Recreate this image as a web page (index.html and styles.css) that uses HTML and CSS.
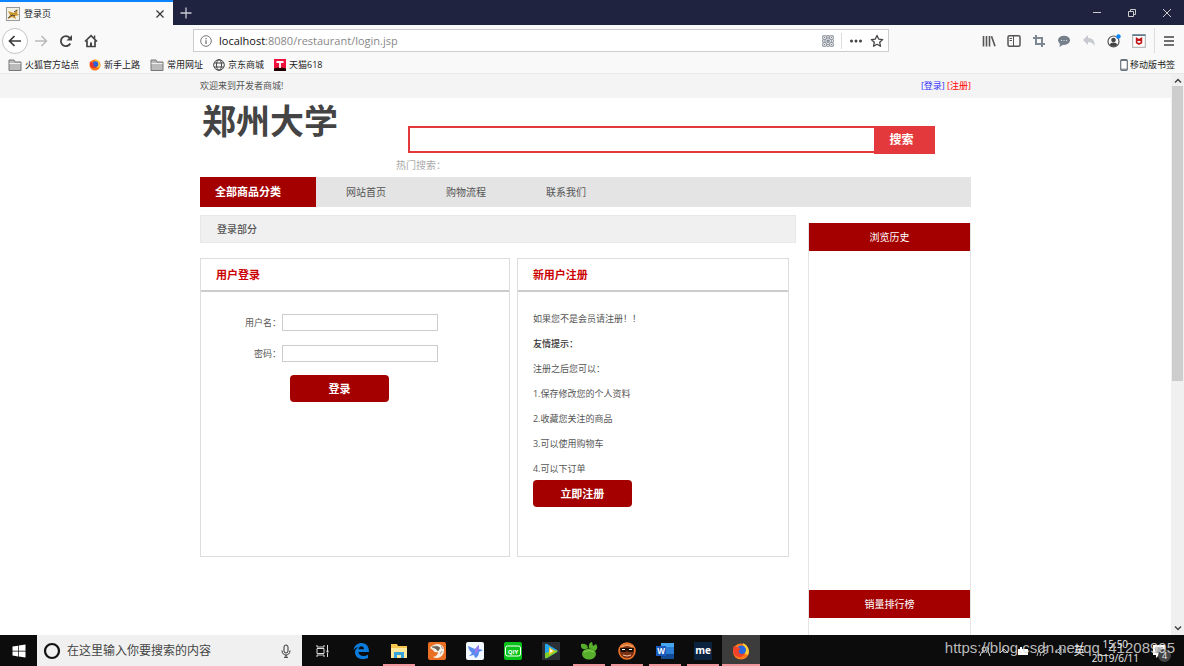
FILE: index.html
```html
<!DOCTYPE html>
<html lang="zh-CN">
<head>
<meta charset="utf-8">
<title>登录页</title>
<link rel="stylesheet" href="styles.css">
</head>
<body>
<div class="titlebar">
  <div class="tab">
    <svg class="i14" viewBox="0 0 14 14"><rect x=".5" y=".5" width="13" height="13" fill="#f3f1e6" stroke="#999"/><path d="M2 4l3 1 3 1 4-4-1 4 2 2-4 1 1 3-4-2-4 2 2-4z" fill="#c9962f"/><path d="M2 11l4-3 3 1M8 5l3-2" stroke="#4c4636" fill="none"/></svg>
    <span class="tab-name">登录页</span>
    <button class="plain" aria-label="关闭标签页"><svg class="i10" viewBox="0 0 10 10"><path d="M1.500 1.500l7 7m0-7l-7 7" stroke="#333" stroke-width="1.200"/></svg></button>
  </div>
  <button class="plain newtab" aria-label="新标签页"><svg class="i12" viewBox="0 0 12 12"><path d="M6 .5v11M.5 6h11" stroke="#c9c9d4" stroke-width="1.300"/></svg></button>
  <div class="winbtns">
    <button class="plain" aria-label="最小化"><svg class="i10" viewBox="0 0 10 10"><path d="M1 4.500h8" stroke="#ccc"/></svg></button>
    <button class="plain" aria-label="还原"><svg class="i10" viewBox="0 0 10 10"><path d="M1.500 3.500h5v5h-5zM3.500 3V1.500h5v5H7" fill="none" stroke="#ccc"/></svg></button>
    <button class="plain" aria-label="关闭"><svg class="i10" viewBox="0 0 10 10"><path d="M1 1l8 8m0-8l-8 8" stroke="#ccc"/></svg></button>
  </div>
</div>
<div class="navbar">
  <div class="navbtns">
    <button class="plain back" aria-label="后退"><svg class="i14" viewBox="0 0 14 14"><path d="M13 7H1.500M6.500 2L1.500 7l5 5" fill="none" stroke="#3a3a3a" stroke-width="1.700"/></svg></button>
    <button class="plain" aria-label="前进"><svg class="i14" viewBox="0 0 14 14"><path d="M1 7h11.500M7.500 2l5 5-5 5" fill="none" stroke="#b9b9b9" stroke-width="1.500"/></svg></button>
    <button class="plain" aria-label="刷新"><svg class="i14" viewBox="0 0 14 14"><path d="M11.300 9.500A5 5 0 1 1 10.800 4" fill="none" stroke="#444" stroke-width="1.800"/><path d="M13 1v5.500H7.500z" fill="#444"/></svg></button>
    <button class="plain" aria-label="主页"><svg class="i14" viewBox="0 0 14 14"><path d="M1 7.500L7 1.700l6 5.800M3 6.500v6h8v-6" fill="none" stroke="#444" stroke-width="1.700"/><path d="M6 8.500h2v4H6zM9.800 1.500h1.500v3H9.800z" fill="#444"/></svg></button>
  </div>
  <div class="urlbar">
    <svg class="i12" viewBox="0 0 12 12"><circle cx="6" cy="6" r="5.300" fill="none" stroke="#777"/><path d="M6 5.200v3.800M6 3v1.200" stroke="#777" stroke-width="1.300"/></svg>
    <span class="url"><b>localhost</b>:8080/restaurant/login.jsp</span>
    <svg class="i12" viewBox="0 0 12 12" fill="none" stroke="#7c858e"><path d="M.8.8h3.500v3.500H.8zM7.700.8h3.500v3.500H7.700zM.8 7.700h3.500v3.500H.8zM7.700 7.700h3.500v3.500H7.700z"/><path d="M6 0v12M0 6h12" stroke-width="1.600" stroke-dasharray="1.500 .7"/><path d="M2 2.500h1M9 2.500h1M2 9.500h1M9 9.500h1"/></svg>
    <span class="sep"></span>
    <svg class="i14" viewBox="0 0 14 14" fill="#444"><circle cx="2.500" cy="7" r="1.500"/><circle cx="7" cy="7" r="1.500"/><circle cx="11.500" cy="7" r="1.500"/></svg>
    <svg class="i14" viewBox="0 0 14 14"><path d="M7 1.400l1.700 3.700 4 .5-3 2.700.8 4L7 10.300l-3.500 2 .8-4-3-2.700 4-.5z" fill="none" stroke="#444" stroke-width="1.300" stroke-linejoin="round"/></svg>
  </div>
  <div class="tools">
    <svg class="i14" viewBox="0 0 14 14"><path d="M1.500 2v10.500M4.500 2v10.500M7.500 2v10.500M9.500 2.200l3.500 10" fill="none" stroke="#555" stroke-width="1.600"/></svg>
    <svg class="i14" viewBox="0 0 14 14"><rect x="1" y="1.700" width="12" height="10.500" rx="1.500" fill="none" stroke="#555" stroke-width="1.500"/><path d="M6.500 2v10M2.500 4.500H5M2.500 6.500H5" stroke="#555"/></svg>
    <svg class="i14" viewBox="0 0 14 14"><path d="M1 4h9v9M4 1v9h9" fill="none" stroke="#7e8893" stroke-width="2"/></svg>
    <svg class="i14" viewBox="0 0 14 14"><ellipse cx="7" cy="6.300" rx="6" ry="4.600" fill="#75808b"/><path d="M3 9l-.5 4 4-2.500z" fill="#75808b"/><path d="M4 6.500h1m1.500 0h1M9 6.500h1" stroke="#dfe3e6"/></svg>
    <svg class="i14" viewBox="0 0 14 14"><path d="M6 1v3c5 0 7 3 6.500 8C11 9 9 8 6 8v3L1 6z" fill="#c6c9ce"/></svg>
    <svg class="i14" viewBox="0 0 14 14"><circle cx="6.500" cy="7.500" r="5.500" fill="none" stroke="#555" stroke-width="1.200"/><circle cx="6.500" cy="6" r="2.300" fill="#444"/><path d="M2.700 10.800c1-3 6.600-3 7.600 0-2 2.500-5.600 2.500-7.600 0z" fill="#444"/><circle cx="11.500" cy="2.500" r="2.200" fill="#0a84ff"/></svg>
    <svg class="i14" viewBox="0 0 14 14"><rect x=".7" y=".7" width="12.600" height="12.600" fill="#fff" stroke="#aaa"/><path d="M.5 1.200h13" stroke="#55748a" stroke-width="1.500"/><path d="M4.600 4.500v4.200L7 10l2.400-1.300V4.500L7 6z" fill="none" stroke="#c01818" stroke-width="1.600"/></svg>
    <span class="sep tall"></span>
    <svg class="i12" viewBox="0 0 12 12"><path d="M1 2h10M1 6h10M1 10h10" stroke="#444" stroke-width="1.500"/></svg>
  </div>
</div>
<nav class="bookmarks">
  <a href="#"><svg class="i14" viewBox="0 0 14 14"><path d="M1 2h5l1 2h6v8.500H1z" fill="#bbb" stroke="#777"/><path d="M1.500 5.500h11" stroke="#eee"/></svg>火狐官方站点</a>
  <a href="#"><svg class="i12" viewBox="0 0 14 14"><circle cx="7" cy="7" r="6.500" fill="#ff7b1a"/><path d="M7 .5a6.500 6.500 0 0 1 5 10L8 9z" fill="#ffc83a"/><circle cx="7.500" cy="6" r="3.300" fill="#2c5fd8"/><path d="M1 3c2 1 3 1 5 3-2 1-1 3 3 3-3 4-8 1-8-3z" fill="#e8342c"/></svg>新手上路</a>
  <a href="#"><svg class="i14" viewBox="0 0 14 14"><path d="M1 2h5l1 2h6v8.500H1z" fill="#bbb" stroke="#777"/><path d="M1.500 5.500h11" stroke="#eee"/></svg>常用网址</a>
  <a href="#"><svg class="i12" viewBox="0 0 12 12" fill="none" stroke="#444"><circle cx="6" cy="6" r="5.300"/><ellipse cx="6" cy="6" rx="2.500" ry="5.300"/><path d="M1.300 4h9.400M1.300 8h9.400"/></svg>京东商城</a>
  <a href="#"><svg class="i12" viewBox="0 0 12 12"><path d="M0 0h12v12H0z" fill="#f0103c"/><path d="M0 9.500q6-2 12 0V12H0z" fill="#200"/><path d="M2.500 3h7M6 3v6" stroke="#fff" stroke-width="1.800"/></svg>天猫618</a>
  <a href="#" class="mobile"><svg class="phone" viewBox="0 0 8 12"><rect x=".7" y=".7" width="6.600" height="10.600" rx="1" fill="#fff" stroke="#6a747c" stroke-width="1.200"/><path d="M1 1.500h6M1 10.200h6" stroke="#6a747c"/></svg>移动版书签</a>
</nav>
<div class="viewport">
  <div class="page">
    <div class="topline"><div class="wrap topline-in">
      <span>欢迎来到开发者商城!</span>
      <span><a class="login" href="#">[登录]</a> <a class="reg" href="#">[注册]</a></span>
    </div></div>
    <div class="wrap">
      <header class="head">
        <h1 class="logo">郑州大学</h1>
        <div class="search">
          <form class="searchbox"><input type="text" aria-label="搜索"><button type="button">搜索</button></form>
          <p class="hot">热门搜索：</p>
        </div>
      </header>
      <nav class="menu">
        <a class="all" href="#">全部商品分类</a>
        <a href="#">网站首页</a><a href="#">购物流程</a><a href="#">联系我们</a>
      </nav>
      <div class="cols">
        <main class="main">
          <h2 class="section">登录部分</h2>
          <div class="cards">
            <section class="card card-login">
              <h3>用户登录</h3>
              <form class="form">
                <label for="u">用户名：</label><input id="u" type="text">
                <label for="p">密码：</label><input id="p" type="password">
                <button type="button" class="btn">登录</button>
              </form>
            </section>
            <section class="card card-reg">
              <h3>新用户注册</h3>
              <div class="tips">
                <p>如果您不是会员请注册！！</p>
                <p><strong>友情提示：</strong></p>
                <p>注册之后您可以：</p>
                <p>1.保存修改您的个人资料</p>
                <p>2.收藏您关注的商品</p>
                <p>3.可以使用购物车</p>
                <p>4.可以下订单</p>
                <button type="button" class="btn">立即注册</button>
              </div>
            </section>
          </div>
        </main>
        <aside class="side">
          <section class="history"><h3>浏览历史</h3></section>
          <section class="rank"><h3>销量排行榜</h3></section>
        </aside>
      </div>
    </div>
  </div>
  <div class="scroll">
    <svg class="i10" viewBox="0 0 10 10"><path d="M2 6.500l3-3 3 3" fill="none" stroke="#444" stroke-width="1.500"/></svg>
    <div class="track"><div class="thumb"></div></div>
    <svg class="i10" viewBox="0 0 10 10"><path d="M2 3.500l3 3 3-3" fill="none" stroke="#444" stroke-width="1.500"/></svg>
  </div>
</div>
<footer class="taskbar">
  <button class="plain start" aria-label="开始"><svg class="i14" viewBox="0 0 14 14" fill="#fff"><path d="M.5 2.500l5.600-.8v5H.5zM6.800 1.600l6.700-1v6.100H6.800zM.5 7.400h5.600v5l-5.600-.8zM6.800 7.400h6.700v6.100l-6.700-1z"/></svg></button>
  <div class="cortana">
    <svg class="i18" viewBox="0 0 18 18"><circle cx="9" cy="9" r="7" fill="none" stroke="#111" stroke-width="2.200"/></svg>
    <input type="text" aria-label="搜索" placeholder="在这里输入你要搜索的内容">
    <svg class="i14" viewBox="0 0 14 14" fill="none" stroke="#333"><rect x="5" y="1" width="4" height="8" rx="2"/><path d="M3 6.500c0 6 8 6 8 0M7 11v2.500M5 13.300h4"/></svg>
  </div>
  <div class="apps">
    <span class="app"><svg class="i14" viewBox="0 0 14 14" fill="none" stroke="#ddd"><path d="M1 1v2h7V1M1 4.500h7v5H1zM1 13v-2h7v2M11.500 1v6M11.500 9v4"/><path d="M10.500 7.500h2" stroke-width="2"/></svg></span>
    <span class="app"><svg class="i18" viewBox="0 0 18 18"><path d="M1.500 8C2.500 3 6 1 9.500 1c5 0 7.500 3.500 7.500 9H6.500c.3 4 5.500 5 9.500 2.700V16c-5 2.500-13 1-13-6 0-2 1.500-4 3.500-5-3 .6-4 2-5 3zM6.500 7.300H12c0-4-5-4-5.500 0z" fill="#0b7bdc" fill-rule="evenodd"/></svg></span>
    <span class="app run"><svg class="i18" viewBox="0 0 18 18"><path d="M1 2h6l1 2h9v12H1z" fill="#f6c64f"/><path d="M1 6h16v10H1z" fill="#ffe79b"/><path d="M4 10h10v6h-3v-3H7v3H4z" fill="#38a4dc"/></svg></span>
    <span class="app"><svg class="i18" viewBox="0 0 18 18"><rect width="18" height="18" rx="2" fill="#e96f22"/><path d="M2 6q3-4 8-4 6 1 6 6 0 6-6 8-4 0-5-1 5-1 5-5-4 1-5-2z" fill="#f7f2e8"/><path d="M4 5q6-2 8 1l-2 3q-2-3-6-4zM13 4l2 3M12 12l2-3" fill="#6b6258" stroke="#6b6258" stroke-width=".6"/></svg></span>
    <span class="app"><svg class="i18" viewBox="0 0 18 18"><rect width="18" height="18" rx="2" fill="#f4f8ff"/><path d="M2 4l7 3 4-4v4l4 1-4 2q0 5-4 6l-1-3-5 1 3-3q-3-2-4-7z" fill="#598cf0"/><path d="M9 7l4-4v5l-4 4z" fill="#9a79ec"/></svg></span>
    <span class="app"><svg class="i18" viewBox="0 0 18 18"><rect width="18" height="18" rx="2" fill="#08c41a"/><rect x="1.500" y="4" width="15" height="10" rx="2" fill="none" stroke="#fff"/><text x="9" y="12" class="iq">QIY</text></svg></span>
    <span class="app"><svg class="i18" viewBox="0 0 18 18"><rect width="18" height="18" fill="#2c3036"/><path d="M3 3q0-2 2-1l10 6q1 1 0 2L5 16q-2 1-2-1z" fill="#25a7ef"/><path d="M3 11l12-3q1 1 0 2L5 16q-2 1-2-1z" fill="#80ce29"/><path d="M7 5l6 4-6 4z" fill="#ffc719"/><path d="M8 7l3 2-3 2z" fill="#fff"/></svg></span>
    <span class="app run"><svg class="i18" viewBox="0 0 18 18" fill="#57ad2c"><ellipse cx="9" cy="12" rx="7" ry="5.500"/><path d="M1 2q6-1 7 4-5 3-7-1zM9 6q-1-5 3-6l1 4 3-2q3 4-1 7z"/><path d="M4 10q5-3 10 0" stroke="#86d64f" fill="none"/></svg></span>
    <span class="app run"><svg class="i18" viewBox="0 0 18 18"><circle cx="9" cy="9" r="8" fill="#7a3015" stroke="#f47629" stroke-width="1.500"/><path d="M3 5q6-4 12 0" stroke="#f29b55" stroke-width="2" fill="none"/><path d="M2 6h14l-1 4H10L9 8 8 10H3z" fill="#190d08"/><path d="M4 7.500h3M11 7.500h3" stroke="#fff"/><path d="M5 13q4 2 8 0" stroke="#f6c9a8" fill="none"/></svg></span>
    <span class="app run"><svg class="i18" viewBox="0 0 18 18"><rect x="5" y="1" width="13" height="16" rx="1" fill="#2b7cd3"/><path d="M5 1h13v4H5z" fill="#45a5ee"/><path d="M5 12h13v5H5z" fill="#124a96"/><path d="M0 4h10v10H0z" fill="#185abd"/><text x="5" y="12" class="wd">W</text></svg></span>
    <span class="app run"><svg class="i18" viewBox="0 0 18 18"><rect width="18" height="18" fill="#0c2340"/><text x="9" y="12" class="me">me</text></svg></span>
    <span class="app run active"><svg class="i18" viewBox="0 0 18 18"><circle cx="9" cy="9.500" r="8" fill="#ff7b1a"/><path d="M11 1a9 9 0 0 1 5 12l-4-2z" fill="#ffd03a"/><circle cx="9.500" cy="8" r="4.500" fill="#2867df"/><path d="M1.500 4l3 1q2 0 4 2-3 2-1 4t5 0q-1 5-6 4Q1 14 1 8z" fill="#f0432a"/></svg></span>
  </div>
  <div class="tray">
    <svg class="i12" viewBox="0 0 12 12" fill="none" stroke="#ddd"><circle cx="5" cy="4" r="2"/><path d="M1 11q1-5 5-4M7 2q4 0 2 4l2 5"/></svg>
    <svg class="i12" viewBox="0 0 12 12"><path d="M2 8l4-4 4 4" fill="none" stroke="#ccc"/></svg>
    <svg class="i12" viewBox="0 0 12 12"><path d="M1 4h2V2h2v2h6v6H1z" fill="#fff"/></svg>
    <svg class="i12" viewBox="0 0 12 12"><path d="M1 11a10 10 0 0 1 10-9M4 11a7 7 0 0 1 7-6M7 11a4 4 0 0 1 4-3" fill="none" stroke="#bbb"/></svg>
    <svg class="i12" viewBox="0 0 12 12"><path d="M1 5h2l3-3v8L3 7H1zM8 4q2 2 0 4" fill="none" stroke="#bbb"/></svg>
    <span class="ime">英</span>
    <div class="clock"><span>15:50</span><span>2019/6/11</span></div>
    <div class="note"><svg class="i14" viewBox="0 0 14 14"><path d="M1 1h12v10H7l-3 3v-3H1z" fill="#fff"/><path d="M3 4h8M3 6h8M3 8h8" stroke="#555"/></svg><span class="count">4</span></div>
  </div>
  <div class="watermark">https://blog.csdn.net/qq_41208995</div>
</footer>
</body>
</html>
```

FILE: styles.css
```css
* { box-sizing: border-box; }
html, body { height: 100%; }
body {
  margin: 0;
  display: flex;
  flex-direction: column;
  overflow: hidden;
  background: #fff;
  color: #555;
  font: 9px/16px "Open Sans", "Noto Sans CJK SC", sans-serif;
}
h1, h2, h3, p { margin: 0; }
a { color: inherit; text-decoration: none; }
input, button { font: inherit; border-radius: 0; }
svg { display: block; flex: none; }
.i10 { width: 10px; height: 10px; }
.i12 { width: 12px; height: 12px; }
.i14 { width: 14px; height: 14px; }
.i18 { width: 18px; height: 18px; }
.plain { display: flex; align-items: center; justify-content: center; padding: 0; border: 0; background: none; }

.titlebar { display: flex; flex: none; height: 25px; background: #20233f; }
.tab { display: flex; align-items: center; gap: 4px; width: 173px; padding: 0 8px 0 6px; border-top: 2px solid #0a84ff; background: #f9f9fa; color: #222; }
.tab-name { flex: 1; }
.newtab { width: 26px; }
.winbtns { display: flex; margin-left: auto; }
.winbtns button { width: 35px; }

.navbar { display: flex; flex: none; align-items: center; height: 31px; background: #f9f9fa; }
.navbtns { display: flex; align-items: center; width: 193px; padding-left: 2px; }
.navbtns button { width: 25px; height: 26px; }
.navbtns .back { width: 26px; border: 1px solid #c4c4c6; border-radius: 50%; background: #fff; }
.urlbar { display: flex; align-items: center; gap: 7px; flex: 1; max-width: 696px; height: 23px; padding: 0 4px 0 6px; border: 1px solid #ccc; background: #fff; }
.url { flex: 1; color: #888; font-size: 11px; }
.url b { color: #111; font-weight: 400; }
.sep { width: 1px; height: 16px; background: #ddd; }
.tall { height: 25px; }
.tools { display: flex; align-items: center; gap: 11px; margin-left: auto; padding-right: 9px; }
.tools .tall { margin: 0 -3px 0 -3px; }

.bookmarks { display: flex; flex: none; align-items: center; gap: 10px; height: 18px; padding: 0 9px 0 8px; border-bottom: 1px solid #e8e8e8; background: #f9f9fa; color: #222; }
.bookmarks a { display: flex; align-items: center; gap: 3px; }
.bookmarks .mobile { margin-left: auto; gap: 2px; }
.phone { width: 8px; height: 12px; }

.viewport { display: flex; flex: 1; min-height: 0; }
.page { flex: 1; overflow: hidden; }
.wrap { width: 65%; min-width: 771px; margin: 0 auto; }
.topline { background: #f4f4f4; }
.topline-in { display: flex; justify-content: space-between; align-items: center; height: 24px; }
.login { color: #33f; }
.reg { color: #f00; }
.head { display: flex; height: 79px; }
.logo { width: 196px; padding: 3px 0 0 2px; color: #444; font: 700 34px/38px "Noto Sans CJK SC", sans-serif; }
.search { flex: 1; padding: 28px 36px 0 0; }
.searchbox { display: flex; height: 28px; margin-left: 12px; }
.searchbox input { flex: 1; min-width: 0; height: 27px; border: 2px solid #e4393c; border-right: 0; background: #fff; }
.searchbox button { width: 61px; padding: 0 6px 0 0; border: 0; background: #e4393c; color: #fff; font-size: 12px; font-weight: 700; }
.hot { padding-top: 3px; color: #aaa; font-size: 10px; }
.menu { display: flex; height: 30px; background: #e4e4e4; font-size: 10px; line-height: 30px; }
.menu a { width: 100px; text-align: center; }
.menu .all { width: 116px; padding-right: 20px; background: #a40000; color: #fff; font-size: 11px; font-weight: 700; }
.cols { display: flex; gap: 12px; padding-top: 8px; }
.main { flex: 1; }
.section { height: 28px; padding-left: 16px; border: 1px solid #e8e8e8; background: #f0f0f0; font-size: 10px; font-weight: 500; line-height: 26px; }
.cards { display: flex; gap: 7px; padding: 15px 7px 0 0; }
.card { height: 299px; border: 1px solid #ddd; }
.card-login { flex: 310; }
.card-reg { flex: 272; }
.card h3 { height: 33px; padding-left: 15px; border-bottom: 2px solid #ccc; color: #c00; font-size: 11px; line-height: 31px; }
.form { display: grid; grid-template-columns: 80px 156px; column-gap: 1px; row-gap: 14px; padding-top: 22px; line-height: 17px; }
.form label { text-align: right; }
.form input { height: 17px; border: 1px solid #ccc; }
.form .btn { grid-column: 2; margin: -1px 0 0 8px; }
.btn { width: 99px; height: 27px; padding: 0; border: 0; border-radius: 4px; background: #a40000; color: #fff; font-size: 11px; font-weight: 700; }
.tips { padding: 14px 15px 0; line-height: 25px; }
.tips p { height: 25px; }
.tips strong { color: #333; font-weight: 500; }
.tips .btn { display: block; margin-top: -1px; }
.side { display: flex; flex-direction: column; width: 163px; padding-top: 8px; }
.side h3 { height: 28px; background: #a40000; color: #fff; font-size: 10px; font-weight: 400; line-height: 28px; text-align: center; }
.side section { border: 1px solid #e4e4e4; border-width: 0 1px; }
.history { height: 367px; }
.rank { height: 200px; }
.scroll { display: flex; flex-direction: column; align-items: center; width: 13px; padding: 2px 0; background: #f0f0f0; }
.track { flex: 1; width: 11px; }
.thumb { height: 55%; background: #cdcdcd; }

.taskbar { position: relative; display: flex; flex: none; height: 31px; background: #0c0c0c; color: #eee; }
.start { width: 37px; }
.cortana { display: flex; align-items: center; gap: 6px; width: 265px; padding: 0 9px 0 6px; background: #f0f0f0; }
.cortana input { flex: 1; min-width: 0; padding: 0; border: 0; background: none; font-size: 12px; }
.cortana input::placeholder { color: #444; opacity: 1; }
.apps { display: flex; padding-left: 2px; }
.app { display: flex; align-items: center; justify-content: center; width: 38px; }
.run { background: linear-gradient(#f0959b, #f0959b) center bottom / 32px 2px no-repeat; }
.active { background-color: #3c3c3c; background-size: 38px 2px; }
.iq, .wd, .me { fill: #fff; text-anchor: middle; font: 700 6px "Open Sans", sans-serif; }
.wd { font-size: 8px; }
.me { font-size: 10px; }
.tray { display: flex; align-items: center; gap: 7px; margin-left: auto; padding-right: 18px; }
.ime { font-size: 11px; }
.clock { display: flex; flex-direction: column; align-items: center; font-size: 10px; line-height: 14px; }
.note { position: relative; margin-left: 6px; }
.count { position: absolute; left: 6px; top: 5px; width: 13px; height: 13px; border-radius: 50%; background: #444; font-size: 9px; line-height: 13px; text-align: center; }
.watermark { position: absolute; right: 9px; top: 3px; color: rgba(220, 220, 220, .85); font: 15px/20px "Liberation Sans", Arial, sans-serif; }
```
